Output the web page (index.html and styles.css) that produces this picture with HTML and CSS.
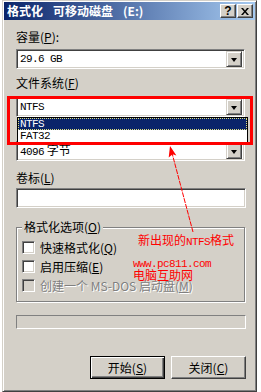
FILE: index.html
```html
<!DOCTYPE html>
<html>
<head>
<meta charset="utf-8">
<link rel="stylesheet" href="styles.css">
</head>
<body>
<div class="window">
  <div class="titlebar">
    <span class="title">格式化<span class="gap"></span>可移动磁盘<span class="gap"></span>(E:)</span>
    <div class="tbtns">
      <span class="tbtn help">?</span>
      <span class="tbtn close"><svg width="8" height="7" viewBox="0 0 8 7"><path d="M0 0h2l2 2.5L6 0h2L5 3.5 8 7H6L4 4.5 2 7H0l3-3.5z" fill="#000"/></svg></span>
    </div>
  </div>
  <div class="content">
    <div class="lbl l-cap">容量(<u>P</u>):</div>
    <div class="combo c-cap"><span class="val mono">29.6 GB</span><span class="drop"><i class="arrow"></i></span></div>
    <div class="lbl l-fs">文件系统(<u>F</u>)</div>
    <div class="combo c-fs"><span class="val mono">NTFS</span><span class="drop"><i class="arrow"></i></span></div>
    <div class="combo c-au"><span class="val"><span class="mono">4096</span> 字节</span><span class="drop"><i class="arrow"></i></span></div>
    <div class="lbl l-vol">卷标(<u>L</u>)</div>
    <div class="textbox"></div>
    <div class="group">
      <span class="legend">格式化选项(<u>O</u>)</span>
      <div class="opt opt-first"><span class="check"></span><span>快速格式化(<u>Q</u>)</span></div>
      <div class="opt"><span class="check"></span><span>启用压缩(<u>E</u>)</span></div>
      <div class="opt disabled"><span class="check"></span><span>创建一个 MS-DOS 启动盘(<u>M</u>)</span></div>
    </div>
    <div class="progress"></div>
    <div class="buttons">
      <span class="btn default">开始(<u>S</u>)</span>
      <span class="btn">关闭(<u>C</u>)</span>
    </div>
  </div>

  <div class="listbox">
    <div class="item selected mono">NTFS</div>
    <div class="item mono">FAT32</div>
  </div>
  <div class="redbox"></div>
  <svg class="pointer" width="255" height="392" viewBox="0 0 255 392">
    <line x1="191" y1="232" x2="170" y2="153" stroke="#ff0000" stroke-width="1" stroke-dasharray="5 1"/>
    <polygon points="168,146 174.4,155.6 170.6,154.2 166.7,157.4" fill="#ff0000"/>
  </svg>
  <div class="note n1">新出现的<span class="mono">NTFS</span>格式</div>
  <div class="note n2 mono">www.pc811.com</div>
  <div class="note n3">电脑互助网</div>
</div>
</body>
</html>
```
FILE: styles.css
```css
html, body {
  margin: 0;
  padding: 0;
  background: #ffffff;
}
body {
  width: 261px;
  height: 392px;
  overflow: hidden;
  font-family: "Noto Sans CJK SC", sans-serif;
  font-size: 12px;
  color: #000;
}
.mono {
  font-family: "Liberation Mono", "Noto Sans CJK SC", monospace;
  font-size: 11px;
  letter-spacing: -0.6px;
}
.window {
  position: relative;
  margin-left: 2px;
  width: 255px;
  height: 392px;
  box-sizing: border-box;
  background: #d4d0c8;
  border: 1px solid;
  border-color: #d4d0c8 #404040 #404040 #d4d0c8;
  box-shadow: inset 1px 1px #ffffff, inset -1px -1px #808080;
  padding: 1px;
  display: flex;
  flex-direction: column;
}
.titlebar {
  height: 18px;
  background: linear-gradient(to right, #0a246a, #a6caf0);
  display: flex;
  align-items: center;
}
.title {
  color: #fff;
  font-weight: bold;
  font-size: 12px;
  line-height: 14px;
  padding-left: 3px;
  white-space: nowrap;
}
.title .gap {
  display: inline-block;
  width: 10px;
}
.tbtns {
  margin-left: auto;
  margin-right: 2px;
  display: flex;
  gap: 1px;
}
.tbtn {
  width: 16px;
  height: 14px;
  box-sizing: border-box;
  background: #d4d0c8;
  border: 1px solid;
  border-color: #ffffff #404040 #404040 #ffffff;
  box-shadow: inset -1px -1px #808080;
  display: flex;
  align-items: center;
  justify-content: center;
}
.tbtn.help {
  font-family: "Liberation Sans", sans-serif;
  font-weight: bold;
  font-size: 12px;
  line-height: 12px;
  padding-bottom: 1px;
}
.content {
  padding: 0 8px 0 12px;
  display: flex;
  flex-direction: column;
  align-items: flex-start;
}
.lbl {
  line-height: 14px;
  height: 14px;
  white-space: nowrap;
}
.l-cap { margin-top: 10px; }
.c-cap { margin-top: 5px; }
.l-fs { margin-top: 7px; }
.c-fs { margin-top: 7px; }
.c-au { margin-top: 24px; }
.l-vol { margin-top: 10px; }

.combo {
  width: 229px;
  height: 20px;
  box-sizing: border-box;
  background: #fff;
  border: 1px solid;
  border-color: #808080 #ffffff #ffffff #808080;
  box-shadow: inset 1px 1px #404040, inset -1px -1px #d4d0c8;
  padding: 2px;
  display: flex;
  align-items: center;
}
.combo .val {
  flex: 1;
  padding-left: 1px;
  line-height: 14px;
  white-space: nowrap;
}
.drop {
  width: 16px;
  height: 16px;
  box-sizing: border-box;
  background: #d4d0c8;
  border: 1px solid;
  border-color: #d4d0c8 #404040 #404040 #d4d0c8;
  box-shadow: inset 1px 1px #ffffff, inset -1px -1px #808080;
  display: flex;
  align-items: center;
  justify-content: center;
}
.arrow {
  display: block;
  width: 0;
  height: 0;
  border-left: 3.5px solid transparent;
  border-right: 3.5px solid transparent;
  border-top: 4px solid #000;
  margin-top: 1px;
}
.textbox {
  margin-top: 3px;
  width: 230px;
  height: 20px;
  box-sizing: border-box;
  background: #fff;
  border: 1px solid;
  border-color: #808080 #ffffff #ffffff #808080;
  box-shadow: inset 1px 1px #404040, inset -1px -1px #d4d0c8;
}
.group {
  margin-top: 19px;
  width: 229px;
  height: 75px;
  box-sizing: border-box;
  border: 1px solid #808080;
  box-shadow: inset 1px 1px #ffffff, 1px 1px #ffffff;
  display: flex;
  flex-direction: column;
  align-items: flex-start;
}
.legend {
  margin-top: -8px;
  margin-left: 5px;
  padding: 0 2px;
  line-height: 14px;
  height: 14px;
  background: #d4d0c8;
}
.opt {
  display: flex;
  align-items: center;
  gap: 5px;
  margin-left: 5px;
  margin-top: 6px;
  height: 13px;
  line-height: 14px;
  white-space: nowrap;
}
.opt-first { margin-top: 7px; }
.check {
  width: 13px;
  height: 13px;
  box-sizing: border-box;
  background: #fff;
  border: 1px solid;
  border-color: #808080 #ffffff #ffffff #808080;
  box-shadow: inset 1px 1px #404040, inset -1px -1px #d4d0c8;
}
.opt.disabled { color: #808080; text-shadow: 1px 1px #ffffff; }
.opt.disabled .check { background: #d4d0c8; }
.progress {
  margin-top: 13px;
  width: 230px;
  height: 14px;
  box-sizing: border-box;
  border: 1px solid;
  border-color: #808080 #ffffff #ffffff #808080;
}
.buttons {
  margin-top: 27px;
  align-self: stretch;
  display: flex;
  justify-content: flex-end;
  gap: 6px;
  padding-right: 1px;
}
.btn {
  width: 75px;
  height: 23px;
  box-sizing: border-box;
  border: 1px solid;
  border-color: #ffffff #404040 #404040 #ffffff;
  box-shadow: inset -1px -1px #808080;
  display: flex;
  align-items: center;
  justify-content: center;
  line-height: 14px;
}
.btn.default {
  border: 1px solid #000;
  box-shadow: inset 1px 1px #ffffff, inset -1px -1px #404040, inset -2px -2px #808080;
}

.listbox {
  position: absolute;
  left: 14px;
  top: 116px;
  width: 231px;
  height: 26px;
  box-sizing: border-box;
  background: #fff;
  border: 1px solid #000;
}
.item {
  height: 12px;
  line-height: 12px;
  padding-left: 2px;
  box-sizing: border-box;
}
.item.selected {
  background: #0a246a;
  color: #fff;
  outline: 1px dotted #e0e080;
  outline-offset: -1px;
}
.redbox {
  position: absolute;
  left: 4px;
  top: 95px;
  width: 246px;
  height: 49px;
  box-sizing: border-box;
  border: 3px solid #ff0000;
}
.pointer {
  position: absolute;
  left: -1px;
  top: -1px;
  pointer-events: none;
}
.note {
  position: absolute;
  color: #ff0000;
  white-space: nowrap;
}
.n1 { left: 135px; top: 232px; line-height: 14px; }
.n2 { left: 130px; top: 258px; line-height: 10px; }
.n3 { left: 130px; top: 268px; line-height: 12px; }
```
